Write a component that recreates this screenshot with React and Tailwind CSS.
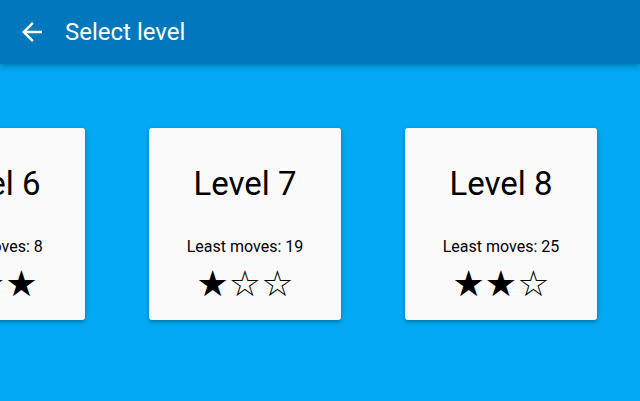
const levels = [
  { n: 6, moves: 8, stars: 3 },
  { n: 7, moves: 19, stars: 1 },
  { n: 8, moves: 25, stars: 2 },
  { n: 9, moves: 30, stars: 0 },
];

function LevelCard({ n, moves, stars }) {
  return (
    <div className="w-[192px] h-[192px] shrink-0 rounded-[3px] bg-[#fafafa] shadow-[0_2px_4px_rgba(0,0,0,0.3)] flex flex-col items-center text-black">
      <div className="mt-[36px] text-[33px] leading-[40px]">Level {n}</div>
      <div className="mt-[33px] text-[16px] leading-[20px]">Least moves: {moves}</div>
      <div className="mt-[7px] text-[36px] leading-[40px] font-['DejaVu_Sans',sans-serif]">
        {[0, 1, 2].map((i) => (i < stars ? "★" : "☆")).join("")}
      </div>
    </div>
  );
}

export default function App() {
  return (
    <div className="w-[640px] h-[401px] overflow-hidden bg-[#03a9f4] font-['Roboto',sans-serif] relative">
      <header className="relative z-10 h-16 bg-[#0277bd] shadow-[0_2px_6px_rgba(0,0,0,0.3)] flex items-center pl-[17px]">
        <svg width="30" height="30" viewBox="0 0 24 24" fill="white">
          <path d="M20 11H7.83l5.59-5.59L12 4l-8 8 8 8 1.41-1.41L7.83 13H20v-2z" />
        </svg>
        <span className="ml-[18px] text-white text-[24px] font-normal">Select level</span>
      </header>
      <main className="pt-16 flex gap-16 ml-[-107px]">
        {levels.map((l) => (
          <LevelCard key={l.n} {...l} />
        ))}
      </main>
    </div>
  );
}
